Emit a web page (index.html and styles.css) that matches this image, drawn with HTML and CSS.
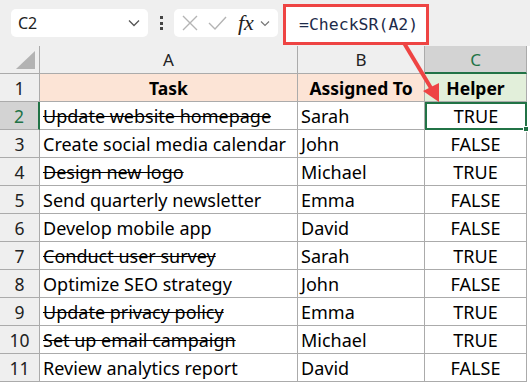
FILE: index.html
```html
<!DOCTYPE html>
<html lang="en">
<head>
    <meta charset="UTF-8">
    <title>CheckSR helper</title>
    <link rel="stylesheet" href="styles.css">
</head>
<body>
    <div class="toolbar">
        <div class="name-box">
            <span>C2</span>
            <svg class="chev" width="12" height="8" viewBox="0 0 12 8"><path d="M1 1.5 L6 6.5 L11 1.5" fill="none" stroke="#555" stroke-width="1.3"/></svg>
        </div>
        <div class="kebab"><i></i><i></i><i></i></div>
        <div class="fx-box">
            <svg width="18" height="18" viewBox="0 0 18 18"><path d="M2 2 L16 16 M16 2 L2 16" stroke="#b4b4b4" stroke-width="1.4"/></svg>
            <svg width="20" height="18" viewBox="0 0 20 18"><path d="M2 9 L8 15 L19 3" fill="none" stroke="#b4b4b4" stroke-width="1.4"/></svg>
            <span class="fx">fx</span>
            <svg width="10" height="7" viewBox="0 0 10 7"><path d="M1 1.5 L5 5.5 L9 1.5" fill="none" stroke="#777" stroke-width="1.2"/></svg>
        </div>
        <div class="formula">=CheckSR(A2)</div>
    </div>

    <div class="sheet">
        <div class="corner"><span></span></div>
        <div class="col-head">A</div>
        <div class="col-head">B</div>
        <div class="col-head active">C</div>

        <div class="row-head">1</div>
        <div class="cell head task">Task</div>
        <div class="cell head task">Assigned To</div>
        <div class="cell head helper">Helper</div>

        <div class="row-head active">2</div>
        <div class="cell done">Update website homepage</div>
        <div class="cell">Sarah</div>
        <div class="cell bool selected">TRUE<span class="handle"></span></div>

        <div class="row-head">3</div>
        <div class="cell">Create social media calendar</div>
        <div class="cell">John</div>
        <div class="cell bool">FALSE</div>

        <div class="row-head">4</div>
        <div class="cell done">Design new logo</div>
        <div class="cell">Michael</div>
        <div class="cell bool">TRUE</div>

        <div class="row-head">5</div>
        <div class="cell">Send quarterly newsletter</div>
        <div class="cell">Emma</div>
        <div class="cell bool">FALSE</div>

        <div class="row-head">6</div>
        <div class="cell">Develop mobile app</div>
        <div class="cell">David</div>
        <div class="cell bool">FALSE</div>

        <div class="row-head">7</div>
        <div class="cell done">Conduct user survey</div>
        <div class="cell">Sarah</div>
        <div class="cell bool">TRUE</div>

        <div class="row-head">8</div>
        <div class="cell">Optimize SEO strategy</div>
        <div class="cell">John</div>
        <div class="cell bool">FALSE</div>

        <div class="row-head">9</div>
        <div class="cell done">Update privacy policy</div>
        <div class="cell">Emma</div>
        <div class="cell bool">TRUE</div>

        <div class="row-head">10</div>
        <div class="cell done">Set up email campaign</div>
        <div class="cell">Michael</div>
        <div class="cell bool">TRUE</div>

        <div class="row-head">11</div>
        <div class="cell">Review analytics report</div>
        <div class="cell">David</div>
        <div class="cell bool">FALSE</div>
    </div>

    <!-- callout arrow from formula bar to C2 -->
    <svg class="arrow" width="530" height="385" viewBox="0 0 530 385">
        <path d="M404 43 L431 88" stroke="#ee4443" stroke-width="4" fill="none"/>
        <path d="M439 102 L423 91 L439 83 Z" fill="#ee4443"/>
    </svg>
</body>
</html>
```

FILE: styles.css
```css
:root {
    --toolbar-bg: #efefef;
    --grid-line: #ababab;
    --green: #217346;
    --peach: #fce4d6;
    --mint: #e2efda;
    --red: #ee4443;
}

* {
    box-sizing: border-box;
}

body {
    margin: 0;
    width: 530px;
    height: 385px;
    overflow: hidden;
    background: #fff;
    font-family: 'Noto Sans', 'Segoe UI', sans-serif;
    color: #000;
    position: relative;
}

.toolbar {
    height: 46px;
    background: var(--toolbar-bg);
    display: flex;
    align-items: center;
    padding: 0 0 0 11px;
}

.name-box {
    width: 137px;
    height: 28px;
    background: #fff;
    border-radius: 5px;
    display: flex;
    align-items: center;
    justify-content: space-between;
    padding: 0 8px 0 7px;
    font-size: 16px;
    color: #222;
}

.kebab {
    width: 26px;
    display: flex;
    flex-direction: column;
    align-items: center;
    gap: 2.5px;
}

.kebab i {
    width: 3px;
    height: 3px;
    background: #444;
}

.fx-box {
    width: 104px;
    height: 28px;
    background: #fff;
    border-radius: 5px;
    display: flex;
    align-items: center;
    gap: 8px;
    padding-left: 7px;
}

.fx {
    font-family: 'Liberation Serif', serif;
    font-style: italic;
    font-size: 22px;
    color: #222;
    margin-left: 3px;
    margin-right: -2px;
}

.formula {
    margin-left: 5px;
    width: 146px;
    height: 41px;
    margin-top: 2px;
    border: 3px solid var(--red);
    background: #fff;
    font-family: 'DejaVu Sans Mono', monospace;
    font-size: 16.5px;
    color: #1d2b4a;
    display: flex;
    align-items: center;
    padding-left: 13px;
}

.sheet {
    display: grid;
    grid-template-columns: 40px 258px 127px 102px;
    grid-template-rows: repeat(12, 28px);
}

.corner,
.col-head,
.row-head,
.cell {
    border-right: 1px solid var(--grid-line);
    border-bottom: 1px solid var(--grid-line);
}

.corner {
    background: var(--toolbar-bg);
    position: relative;
}

.corner span {
    position: absolute;
    right: 4px;
    bottom: 4px;
    width: 0;
    height: 0;
    border-left: 19px solid transparent;
    border-bottom: 18px solid #b3b3b3;
}

.col-head {
    background: var(--toolbar-bg);
    display: flex;
    align-items: center;
    justify-content: center;
    font-size: 17px;
    color: #222;
}

.col-head.active {
    background: #d3d3d3;
    color: var(--green);
    border-bottom: 2px solid var(--green);
}

.row-head {
    background: var(--toolbar-bg);
    display: flex;
    align-items: center;
    justify-content: center;
    font-size: 17.5px;
    color: #222;
}

.row-head.active {
    background: #d3d3d3;
    color: var(--green);
    border-right: 2px solid var(--green);
}

.cell {
    display: flex;
    align-items: center;
    padding-left: 3px;
    font-size: 18px;
    white-space: nowrap;
}

.cell.head {
    justify-content: center;
    font-weight: bold;
    font-size: 17.5px;
    padding-left: 0;
}

.cell.task {
    background: var(--peach);
}

.cell.helper {
    background: var(--mint);
}

.cell.done {
    text-decoration: line-through;
}

.cell.bool {
    justify-content: center;
    padding-left: 0;
}

.cell.selected {
    border: 2px solid var(--green);
    position: relative;
}

.handle {
    position: absolute;
    right: -4px;
    bottom: -4px;
    width: 6px;
    height: 6px;
    background: var(--green);
    border: 1px solid #fff;
}

.arrow {
    position: absolute;
    left: 0;
    top: 0;
    pointer-events: none;
}
```
